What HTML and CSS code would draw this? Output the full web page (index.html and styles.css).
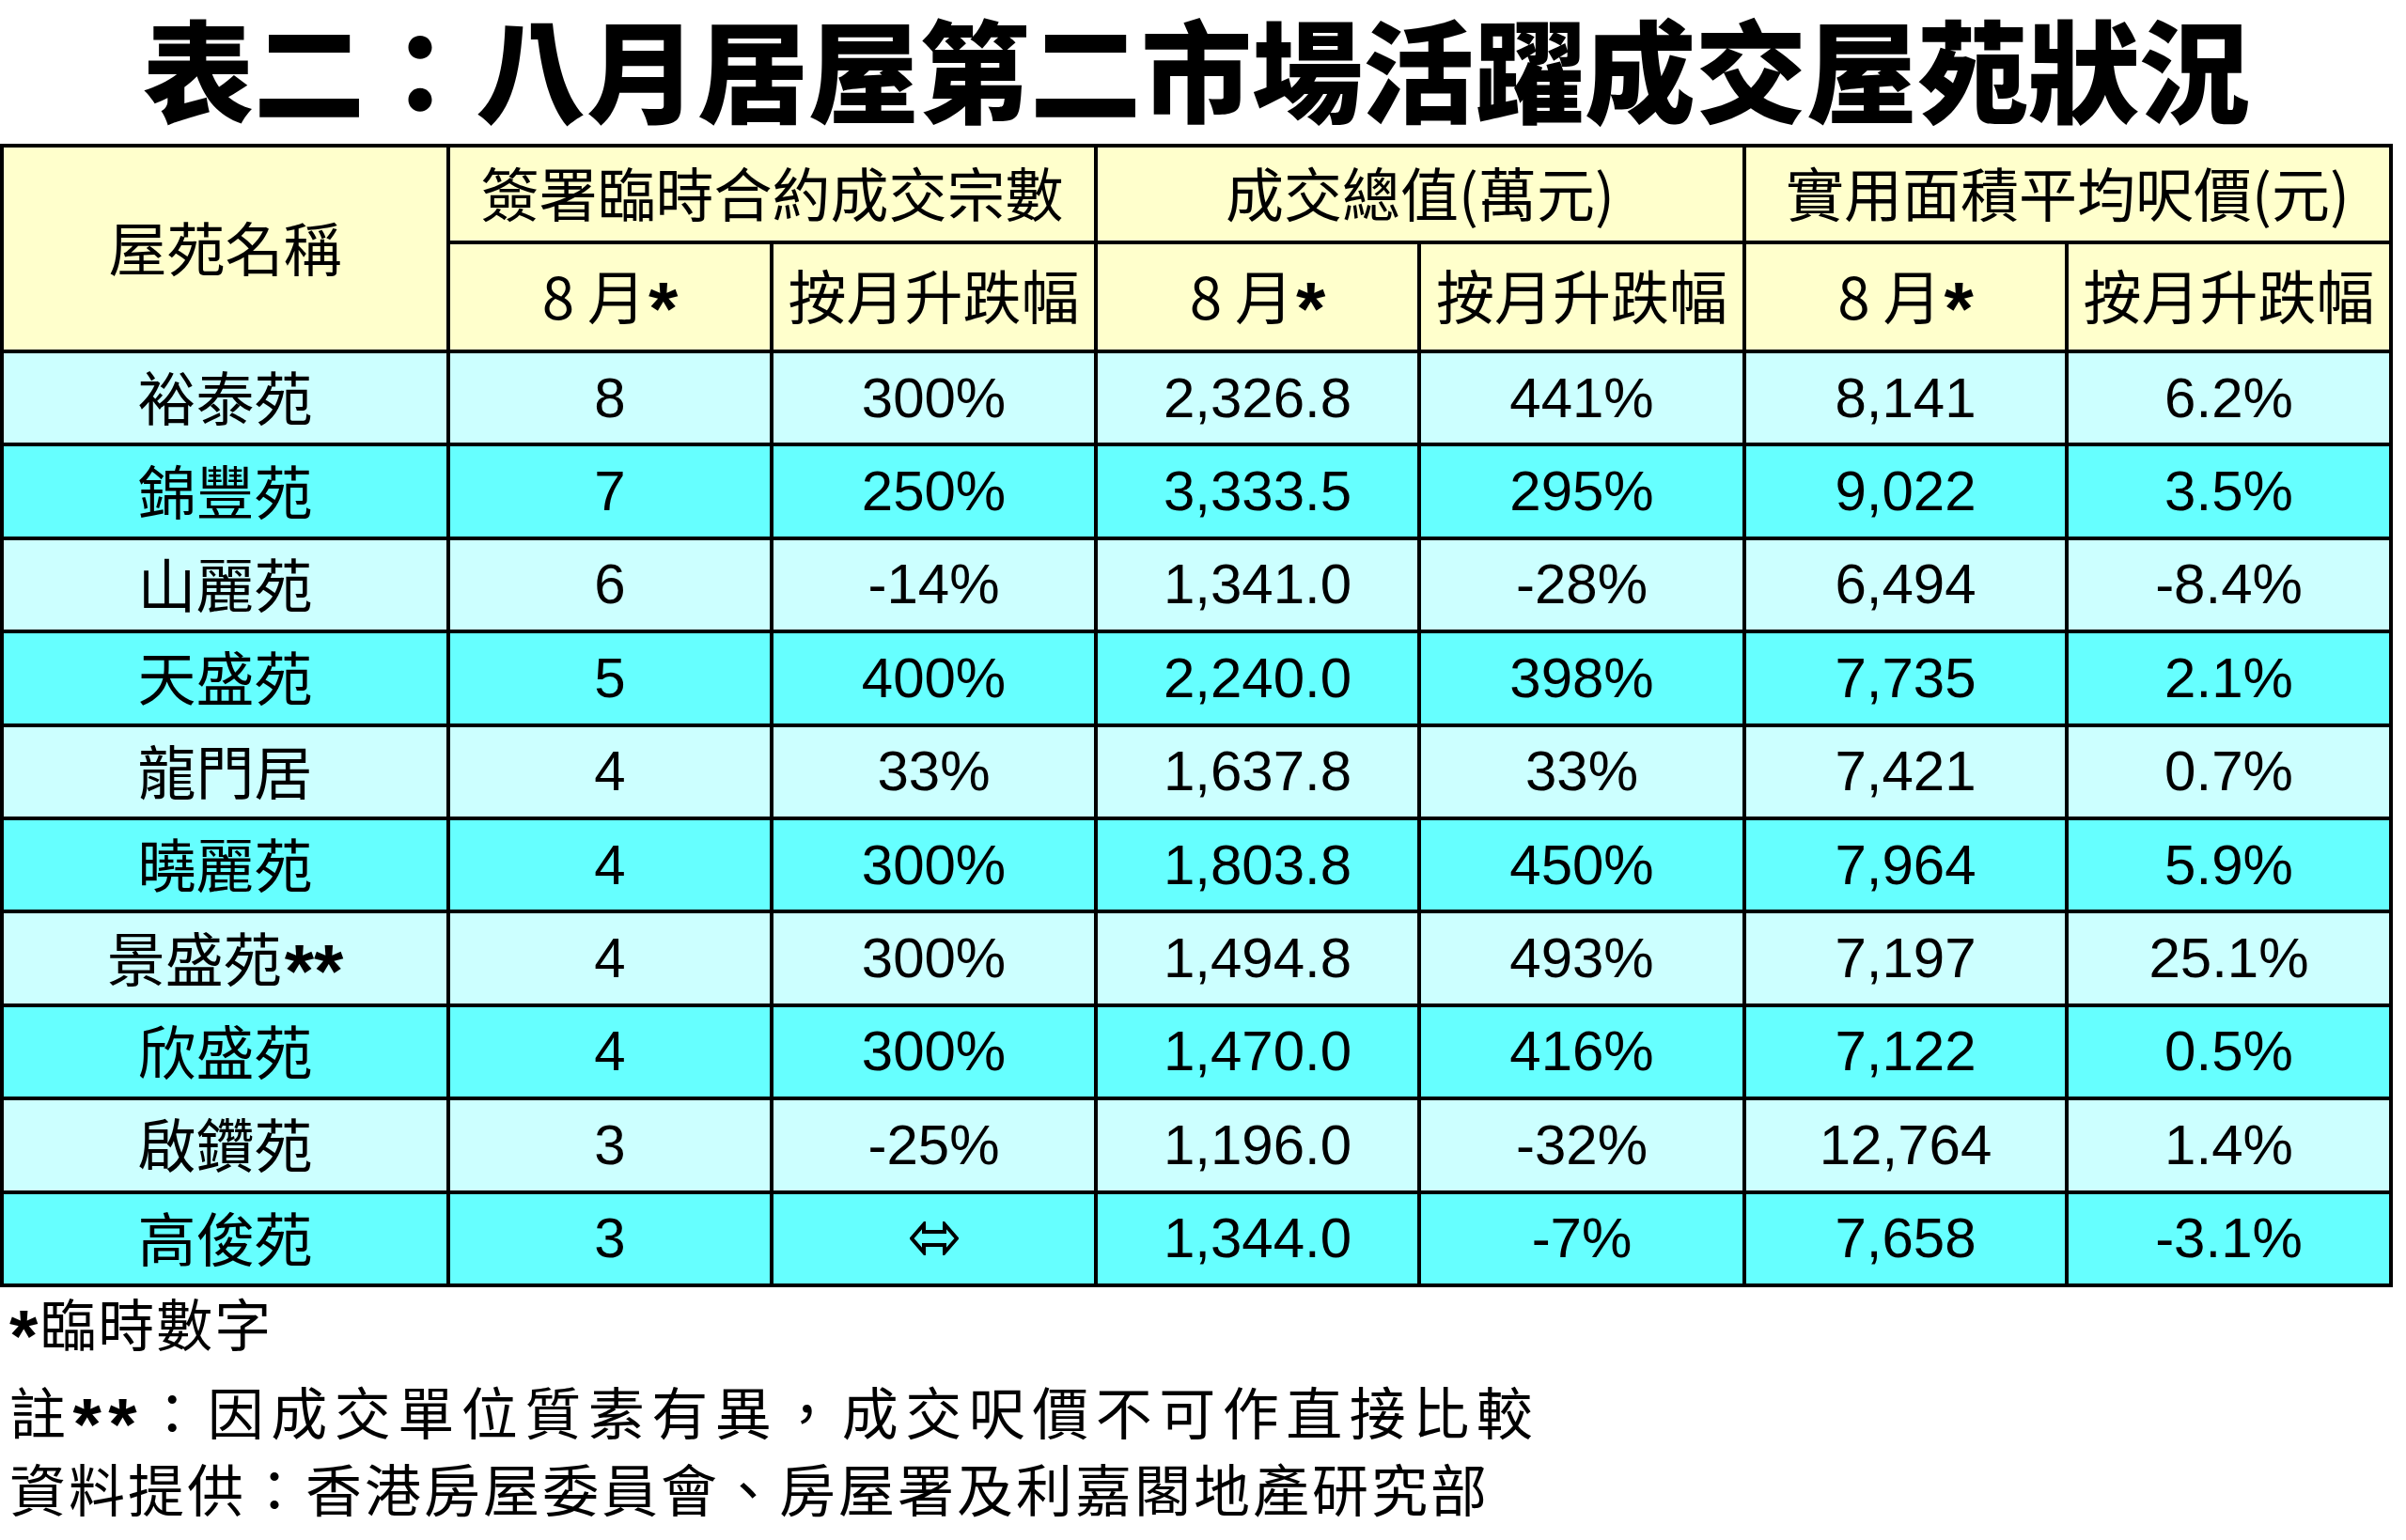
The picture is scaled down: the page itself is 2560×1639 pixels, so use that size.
FILE: index.html
```html
<!DOCTYPE html>
<html lang="zh-Hant">
<head>
<meta charset="utf-8">
<title>表二：八月居屋第二市場活躍成交屋苑狀況</title>
<link rel="stylesheet" href="styles.css">
</head>
<body>
<div class="page">
  <h1 class="title">表二：八月居屋第二市場活躍成交屋苑狀況</h1>
  <div class="grid">
    <div class="cell head name-head">屋苑名稱</div>
    <div class="cell head group">簽署臨時合約成交宗數</div>
    <div class="cell head group">成交總值(萬元)</div>
    <div class="cell head group">實用面積平均呎價(元)</div>
    <div class="cell head sub"><span class="txt">8 月<span class="ast">*</span></span></div>
    <div class="cell head sub">按月升跌幅</div>
    <div class="cell head sub"><span class="txt">8 月<span class="ast">*</span></span></div>
    <div class="cell head sub">按月升跌幅</div>
    <div class="cell head sub"><span class="txt">8 月<span class="ast">*</span></span></div>
    <div class="cell head sub">按月升跌幅</div>

    <div class="cell light name">裕泰苑</div><div class="cell light num">8</div><div class="cell light num">300%</div><div class="cell light num">2,326.8</div><div class="cell light num">441%</div><div class="cell light num">8,141</div><div class="cell light num">6.2%</div>
    <div class="cell dark name">錦豐苑</div><div class="cell dark num">7</div><div class="cell dark num">250%</div><div class="cell dark num">3,333.5</div><div class="cell dark num">295%</div><div class="cell dark num">9,022</div><div class="cell dark num">3.5%</div>
    <div class="cell light name">山麗苑</div><div class="cell light num">6</div><div class="cell light num">-14%</div><div class="cell light num">1,341.0</div><div class="cell light num">-28%</div><div class="cell light num">6,494</div><div class="cell light num">-8.4%</div>
    <div class="cell dark name">天盛苑</div><div class="cell dark num">5</div><div class="cell dark num">400%</div><div class="cell dark num">2,240.0</div><div class="cell dark num">398%</div><div class="cell dark num">7,735</div><div class="cell dark num">2.1%</div>
    <div class="cell light name">龍門居</div><div class="cell light num">4</div><div class="cell light num">33%</div><div class="cell light num">1,637.8</div><div class="cell light num">33%</div><div class="cell light num">7,421</div><div class="cell light num">0.7%</div>
    <div class="cell dark name">曉麗苑</div><div class="cell dark num">4</div><div class="cell dark num">300%</div><div class="cell dark num">1,803.8</div><div class="cell dark num">450%</div><div class="cell dark num">7,964</div><div class="cell dark num">5.9%</div>
    <div class="cell light name"><span class="txt">景盛苑<span class="ast">**</span></span></div><div class="cell light num">4</div><div class="cell light num">300%</div><div class="cell light num">1,494.8</div><div class="cell light num">493%</div><div class="cell light num">7,197</div><div class="cell light num">25.1%</div>
    <div class="cell dark name">欣盛苑</div><div class="cell dark num">4</div><div class="cell dark num">300%</div><div class="cell dark num">1,470.0</div><div class="cell dark num">416%</div><div class="cell dark num">7,122</div><div class="cell dark num">0.5%</div>
    <div class="cell light name">啟鑽苑</div><div class="cell light num">3</div><div class="cell light num">-25%</div><div class="cell light num">1,196.0</div><div class="cell light num">-32%</div><div class="cell light num">12,764</div><div class="cell light num">1.4%</div>
    <div class="cell dark name">高俊苑</div><div class="cell dark num">3</div><div class="cell dark num"><svg class="both" viewBox="0 0 52 36" aria-label="⇔"><polygon points="2,18 15,3 15,11 37,11 37,3 50,18 37,33 37,25 15,25 15,33" /></svg></div><div class="cell dark num">1,344.0</div><div class="cell dark num">-7%</div><div class="cell dark num">7,658</div><div class="cell dark num">-3.1%</div>
  </div>
  <div class="notes">
    <p class="note note1"><span class="ast">*</span>臨時數字</p>
    <p class="note note2">註<span class="ast">**</span>：因成交單位質素有異，成交呎價不可作直接比較</p>
    <p class="note note3">資料提供：香港房屋委員會、房屋署及利嘉閣地產研究部</p>
  </div>
</div>
</body>
</html>
```
FILE: styles.css
```css
html, body {
  margin: 0;
  padding: 0;
  background: #ffffff;
}

body {
  font-family: "Noto Sans CJK TC", "Noto Sans CJK SC", sans-serif;
  color: #000000;
}

.page {
  width: 2560px;
}

.title {
  margin: 0;
  width: 2546px;
  height: 153px;
  box-sizing: border-box;
  padding-bottom: 12px;
  display: flex;
  align-items: center;
  justify-content: center;
  font-size: 118px;
  font-weight: 900;
  line-height: 1.1;
  white-space: nowrap;
}

.grid {
  display: grid;
  width: 2546px;
  box-sizing: border-box;
  grid-template-columns: 475px 344px 345px 344px 346px 343px 345px;
  grid-template-rows: 103px 116px repeat(10, 99.4px);
  border-top: 4px solid #000;
  border-left: 4px solid #000;
}

.cell {
  box-sizing: border-box;
  border-right: 4px solid #000;
  border-bottom: 4px solid #000;
  display: flex;
  align-items: center;
  justify-content: center;
  white-space: nowrap;
}

.txt {
  display: block;
  line-height: 1;
}

.head {
  background: #ffffcc;
  font-size: 62px;
  line-height: 1;
  padding-bottom: 6px;
}

.name-head {
  grid-row: 1 / span 2;
}

.group {
  grid-column: span 2;
}

.light {
  background: #ccffff;
}

.dark {
  background: #66ffff;
}

.name {
  font-size: 62px;
  line-height: 1;
  padding-bottom: 5px;
}

.ast {
  font-family: "Liberation Sans", sans-serif;
  font-size: 1.3em;
  font-weight: bold;
  line-height: 0;
  vertical-align: -0.2em;
  margin-left: 3px;
}

.num {
  font-family: "Liberation Sans", "Noto Sans CJK TC", sans-serif;
  font-size: 60px;
  line-height: 1;
}

.both {
  width: 52px;
  height: 36px;
}

.both polygon {
  fill: none;
  stroke: #000;
  stroke-width: 4;
  stroke-linejoin: miter;
}

.notes {
  padding-left: 10px;
}

.note {
  margin: 0;
  font-size: 60px;
  line-height: 70px;
  white-space: nowrap;
}

.note .ast {
  margin-left: 0;
}

.note1 {
  margin-top: 2px;
  letter-spacing: 2px;
}

.note2 {
  margin-top: 24px;
  letter-spacing: 7.5px;
}

.note3 {
  margin-top: 12px;
  letter-spacing: 3px;
}
```
